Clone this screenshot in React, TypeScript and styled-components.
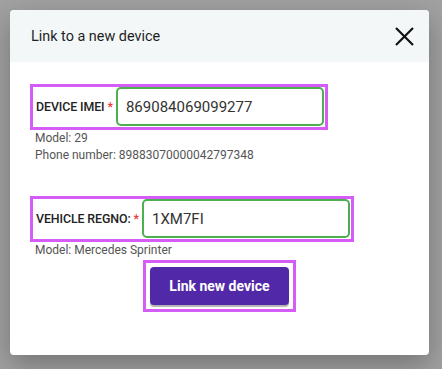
import styled, { createGlobalStyle } from "styled-components"

const GlobalStyle = createGlobalStyle`
  html, body {
    margin: 0;
    padding: 0;
    background: #a1a1a1;
    font-family: Roboto, "Liberation Sans", sans-serif;
  }
`

const Overlay = styled.div`
  height: 369px;
  padding: 10px 0 0 10px;
  box-sizing: border-box;
`

const Modal = styled.div`
  width: 419px;
  height: 345px;
  background: #fff;
  border-radius: 4px;
  overflow: hidden;
  box-shadow: 0 10px 28px rgba(0, 0, 0, 0.28);
  display: flex;
  flex-direction: column;
`

const Header = styled.div`
  height: 52px;
  background: #f3f7f8;
  display: flex;
  align-items: center;
  justify-content: space-between;
  padding: 0 15px 0 21px;
`

const Title = styled.h2`
  margin: 0;
  font-size: 14.4px;
  font-weight: 400;
  color: #1f1f1f;
`

const CloseButton = styled.button`
  border: none;
  background: none;
  padding: 0;
  width: 20px;
  height: 20px;
  display: flex;
  align-items: center;
  justify-content: center;
  cursor: pointer;
`

const Body = styled.div`
  padding: 22px 20px 0 20px;
  display: flex;
  flex-direction: column;
`

const Field = styled.div<{ $gap: number }>`
  margin-top: ${(p) => p.$gap}px;
  align-self: flex-start;
  display: flex;
  align-items: center;
  border: 3px solid #d55cf6;
  padding: 0 1px 1px 3px;
`

const Label = styled.label`
  font-size: 12.4px;
  font-weight: 500;
  color: #222;
  margin-right: 3px;
  white-space: nowrap;
  letter-spacing: -0.1px;
`

const Required = styled.span`
  color: #e53935;
  margin-left: 3px;
`

const Input = styled.input`
  width: 208px;
  height: 39px;
  box-sizing: border-box;
  border: 2px solid #4caf50;
  border-radius: 5px;
  padding: 0 0 0 8px;
  font-family: Roboto, "Liberation Sans", sans-serif;
  font-size: 15px;
  color: #333;
  outline: none;
`

const Info = styled.div`
  font-size: 12px;
  color: #555;
  line-height: 17px;
  padding-left: 5px;
`

const Actions = styled.div`
  display: flex;
  justify-content: center;
  margin-top: 1px;
`

const ButtonFrame = styled.div`
  border: 3px solid #d55cf6;
  padding: 4px;
  background: #fff;
`

const PrimaryButton = styled.button`
  width: 139px;
  height: 38px;
  border: none;
  border-radius: 4px;
  background: #5129a8;
  color: #fff;
  font-family: Roboto, "Liberation Sans", sans-serif;
  font-size: 14px;
  font-weight: 700;
  box-shadow: 0 2px 1px rgba(0, 0, 0, 0.3);
  cursor: pointer;
`

const CloseIcon = () => (
  <svg width="19" height="19" viewBox="0 0 19 19">
    <path d="M1 1 L18 18 M18 1 L1 18" stroke="#111" strokeWidth="2.2" />
  </svg>
)

const App = () => (
  <>
    <GlobalStyle />
    <Overlay>
      <Modal>
        <Header>
          <Title>Link to a new device</Title>
          <CloseButton aria-label="Close">
            <CloseIcon />
          </CloseButton>
        </Header>
        <Body>
          <Field $gap={0}>
            <Label>
              DEVICE IMEI<Required>*</Required>
            </Label>
            <Input defaultValue="869084069099277" />
          </Field>
          <Info>Model: 29</Info>
          <Info>Phone number: 89883070000042797348</Info>
          <Field $gap={32}>
            <Label>
              VEHICLE REGNO:<Required>*</Required>
            </Label>
            <Input defaultValue="1XM7FI" />
          </Field>
          <Info>Model: Mercedes Sprinter</Info>
          <Actions>
            <ButtonFrame>
              <PrimaryButton>Link new device</PrimaryButton>
            </ButtonFrame>
          </Actions>
        </Body>
      </Modal>
    </Overlay>
  </>
)

export default App
